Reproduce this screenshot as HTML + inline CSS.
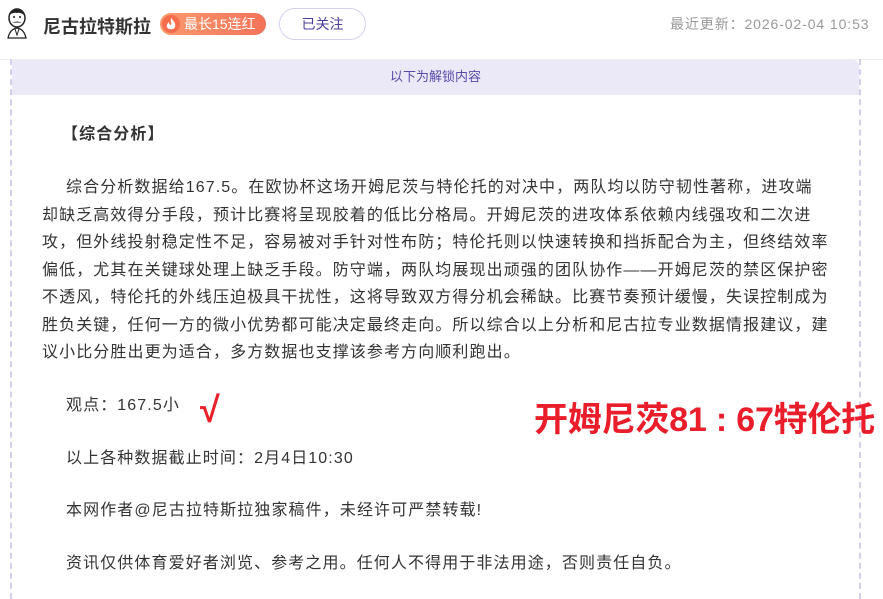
<!DOCTYPE html>
<html><head><meta charset="utf-8"><style>
body{margin:0;width:883px;height:580px;overflow:hidden;background:#fff;font-family:"Liberation Sans","Noto Sans CJK SC",sans-serif;position:relative}
.a{position:absolute;white-space:nowrap}
.p{font-size:16px;color:#333;letter-spacing:1.1px}
</style></head><body>
<svg class="a" style="left:4px;top:8px" width="26" height="32" viewBox="0 0 26 32">
<ellipse cx="13" cy="10" rx="8" ry="9" fill="#fff" stroke="#222" stroke-width="1.5"/>
<path d="M5 8 Q6 1 13 1 Q20 1 21 8 Q17 4 13 5 Q8 4 5 8Z" fill="#222"/>
<path d="M8 15 Q13 12 18 15 Q13 14 8 15Z" fill="#222"/>
<circle cx="10" cy="9" r="1" fill="#222"/><circle cx="16" cy="9" r="1" fill="#222"/>
<path d="M4 30 Q6 21 13 20 Q20 21 22 30Z" fill="#fff" stroke="#222" stroke-width="1.3"/>
<path d="M11 21 L13 27 L15 21" fill="none" stroke="#222"/>
</svg>
<div class="a" style="left:43px;top:13px;font-size:18px;font-weight:bold;color:#333">尼古拉特斯拉</div>
<div class="a" style="left:160px;top:13px;width:106px;height:22px;border-radius:11px;background:linear-gradient(90deg,#f89a6c,#f4735a)"></div>
<div class="a" style="left:162px;top:15px;width:18px;height:18px;border-radius:50%;background:#f56d4a"></div>
<svg class="a" style="left:165px;top:17px" width="12" height="14" viewBox="0 0 12 14"><path d="M6 1 C9 4 11 7 10 10 C9 13 3 13 2 10 C1 8 3 6 4 5 C4 7 5 8 6 8 C7 6 5 3 6 1Z" fill="#fff"/></svg>
<div class="a" style="left:184px;top:15px;font-size:14px;color:#fff;line-height:18px">最长15连红</div>
<div class="a" style="left:279px;top:8px;width:87px;height:32px;border:1px solid #d6d0ee;border-radius:17px;box-sizing:border-box;text-align:center;line-height:30px;font-size:14px;color:#4a3f9a">已关注</div>
<div class="a" style="left:670px;top:14px;font-size:14px;color:#999;line-height:20px;letter-spacing:0.9px">最近更新：2026-02-04 10:53</div>
<div class="a" style="left:0;top:59px;width:883px;border-top:1px solid #eee"></div>
<div class="a" style="left:10px;top:59px;width:851px;height:540px;border-left:2px dashed #d5cfee;border-right:2px dashed #d5cfee;box-sizing:border-box"></div>
<div class="a" style="left:12px;top:60px;width:847px;height:35px;background:#ebe8f7;text-align:center;line-height:33px;font-size:13px;color:#5a4aa8;border-radius:0 6px 0 0">以下为解锁内容</div>
<div class="a p" style="left:62px;top:125px;font-weight:bold;line-height:20px">【综合分析】</div>
<div class="a p" style="left:42px;top:174px;line-height:27.5px;white-space:nowrap">
<div style="padding-left:24px">综合分析数据给167.5。在欧协杯这场开姆尼茨与特伦托的对决中，两队均以防守韧性著称，进攻端</div>
<div>却缺乏高效得分手段，预计比赛将呈现胶着的低比分格局。开姆尼茨的进攻体系依赖内线强攻和二次进</div>
<div>攻，但外线投射稳定性不足，容易被对手针对性布防；特伦托则以快速转换和挡拆配合为主，但终结效率</div>
<div>偏低，尤其在关键球处理上缺乏手段。防守端，两队均展现出顽强的团队协作——开姆尼茨的禁区保护密</div>
<div>不透风，特伦托的外线压迫极具干扰性，这将导致双方得分机会稀缺。比赛节奏预计缓慢，失误控制成为</div>
<div>胜负关键，任何一方的微小优势都可能决定最终走向。所以综合以上分析和尼古拉专业数据情报建议，建</div>
<div>议小比分胜出更为适合，多方数据也支撑该参考方向顺利跑出。</div>
</div>
<div class="a p" style="left:66px;top:391px">观点：167.5小</div>
<div class="a" style="left:200px;top:390px;font-size:36px;color:#e8202a;font-weight:bold;line-height:40px">√</div>
<div class="a" style="left:534px;top:398px;font-size:34px;color:#ea1d2b;font-weight:bold;line-height:44px;letter-spacing:-0.2px">开姆尼茨81 : 67特伦托</div>
<div class="a p" style="left:66px;top:444px">以上各种数据截止时间：2月4日10:30</div>
<div class="a p" style="left:66px;top:496px">本网作者@尼古拉特斯拉独家稿件，未经许可严禁转载!</div>
<div class="a p" style="left:66px;top:549px">资讯仅供体育爱好者浏览、参考之用。任何人不得用于非法用途，否则责任自负。</div>
</body></html>
